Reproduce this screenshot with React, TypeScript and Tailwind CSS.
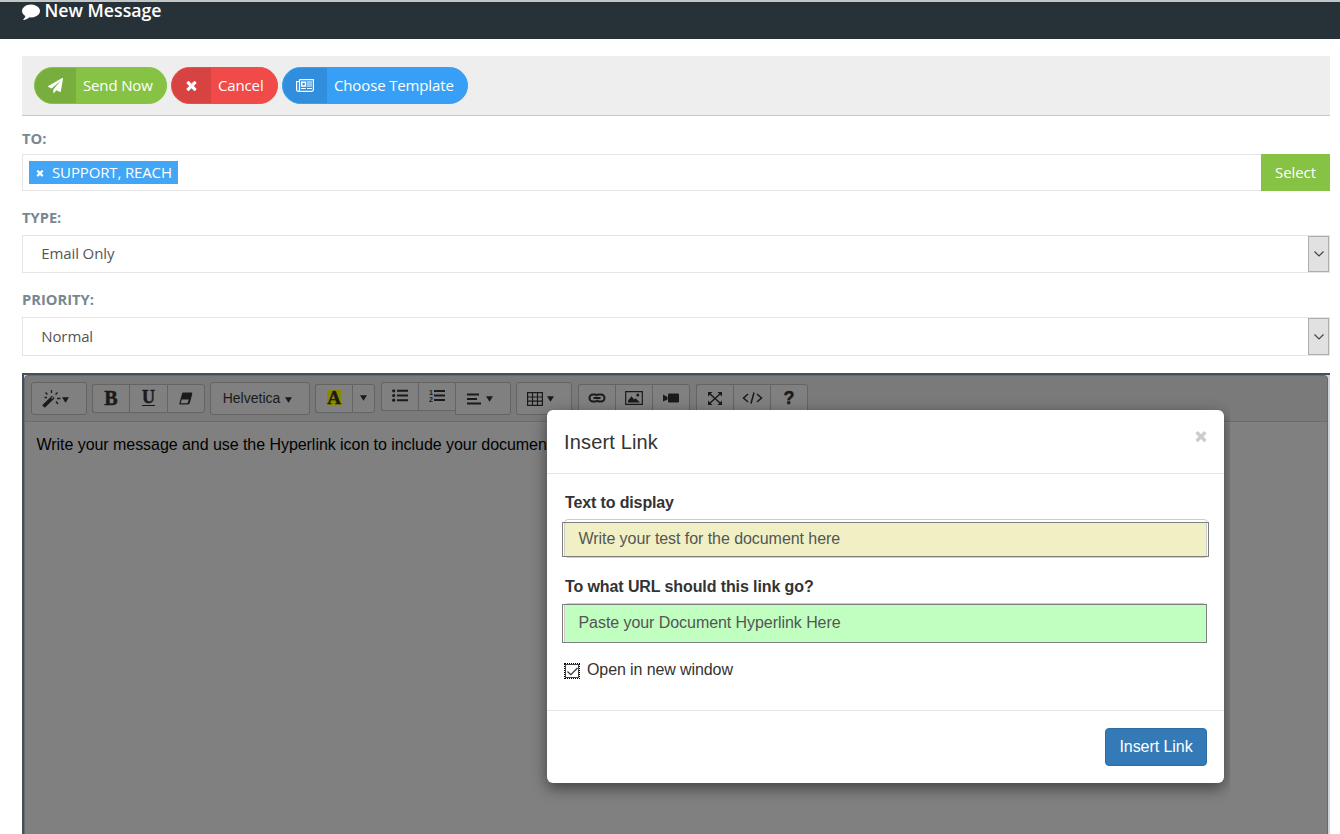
import React from "react";

type IconProps = { className?: string };

const CommentIcon = ({ className }: IconProps) => (
  <svg viewBox="0 0 1792 1792" fill="currentColor" className={className}>
    <path d="M1792 896q0 174-120 321.5t-326 233-450 85.5q-70 0-145-8-198 175-460 242-49 14-114 22-17 2-30.5-9t-17.5-29v-1q-3-4-.5-12t2-10 4.5-9.5l6-9 7-8.5 8-9q7-8 31-34.5t34.5-38 31-39.5 32.5-51 27-59 26-76q-157-89-247.5-220t-90.5-281q0-130 71-248.5t191-204.5 286-136.5 348-50.5q244 0 450 85.5t326 233 120 321.5z" />
  </svg>
);

const PlaneIcon = ({ className }: IconProps) => (
  <svg viewBox="0 0 1792 1792" fill="currentColor" className={className}>
    <path d="M1764 11q33 24 27 64l-256 1536q-5 29-32 45-14 8-31 8-11 0-24-5l-453-185-242 295q-18 23-49 23-13 0-22-4-19-7-30.5-23.5t-11.5-36.5v-349l864-1059-1069 925-395-162q-37-14-40-55-2-40 32-59l1664-960q15-9 32-9 20 0 36 11z" />
  </svg>
);

const TimesIcon = ({ className }: IconProps) => (
  <svg viewBox="0 0 1792 1792" fill="currentColor" className={className}>
    <path d="M1490 1322q0 40-28 68l-136 136q-28 28-68 28t-68-28l-294-294-294 294q-28 28-68 28t-68-28l-136-136q-28-28-28-68t28-68l294-294-294-294q-28-28-28-68t28-68l136-136q28-28 68-28t68 28l294 294 294-294q28-28 68-28t68 28l136 136q28 28 28 68t-28 68l-294 294 294 294q28 28 28 68z" />
  </svg>
);

const NewsIcon = ({ className }: IconProps) => (
  <svg viewBox="0 0 18 13" fill="none" stroke="currentColor" className={className}>
    <path d="M3.5.6h13.9v10.2q0 1.5-1.5 1.5H2.1Q.6 12.300 .6 10.800V2.500h2.900M3.500.6v10.200q0 1.500-1.500 1.500" strokeWidth="1.200" />
    <path d="M5.700 3.200h3.800v3.700h-3.800z" strokeWidth="1.500" />
    <path d="M11 3h5M11 5h5M11 7h5M5 9.500h4.800M11 9.500h5" strokeWidth="1.100" />
  </svg>
);

const MagicIcon = () => (
  <svg width="20" height="18" viewBox="0 0 20 18" fill="none" stroke="currentColor">
    <path d="M1.500 16.500L11.300 7" strokeWidth="3.800" />
    <path d="M9.500 8.700L11 7.200" stroke="#7f7f7f" strokeWidth="1.200" />
    <path d="M9.500 0v3M3.500 2.500l2 2M15.500 2.500l-2 2M2.500 7.500H5M15 8.500h3.500M14 11.500l2 2.500" strokeWidth="1.300" />
  </svg>
);

const EraserIcon = () => (
  <svg width="14" height="13" viewBox="0 0 14 13" fill="currentColor">
    <path fillRule="evenodd" d="M4.200.5H12.500q1.100 0 .8 1.200L11 10.500Q10.500 12.500 9 12.500H1.200Q0 12.500.4 11.200L3 1.700Q3.300.5 4.200.5zM2.700 7.500L1.700 11.200H8.500L9.800 7.500z" />
  </svg>
);

const Caret = ({ className = "" }: IconProps) => (
  <svg width="7" height="6" viewBox="0 0 7 6" fill="currentColor" className={className}>
    <path d="M0 .3h7L3.500 5.700z" />
  </svg>
);

const ListUlIcon = () => (
  <svg width="16" height="13" viewBox="0 0 16 13" fill="currentColor">
    <path d="M5 .8h11v2H5zM5 5.500h11v2H5zM5 10.200h11v2H5z" />
    <circle cx="1.700" cy="1.800" r="1.600" />
    <circle cx="1.700" cy="6.500" r="1.600" />
    <circle cx="1.700" cy="11.200" r="1.600" />
  </svg>
);

const ListOlIcon = () => (
  <svg width="16" height="13" viewBox="0 0 16 13" fill="currentColor">
    <path d="M5 1h11v2H5zM5 5.500h11v2H5zM5 10h11v2H5z" />
    <text x="0" y="5.600" fontSize="7" fontWeight="700" fontFamily="Liberation Sans, sans-serif">1</text>
    <text x="0" y="12.700" fontSize="7" fontWeight="700" fontFamily="Liberation Sans, sans-serif">2</text>
  </svg>
);

const AlignIcon = () => (
  <svg width="14" height="12" viewBox="0 0 14 12" fill="currentColor">
    <path d="M0 .5h12v2H0zM0 5h10v2H0zM0 9.500h14v2H0z" />
  </svg>
);

const TableIcon = () => (
  <svg width="16" height="14" viewBox="0 0 16 14" fill="none" stroke="currentColor" strokeWidth="1.200">
    <path d="M.6.6h14.800v12.800H.6zM.6 5h14.800M.6 9.200h14.800M5.500.6v12.800M10.500.6v12.800" />
  </svg>
);

const LinkIcon = () => (
  <svg width="18" height="10" viewBox="0 0 18 10" fill="none" stroke="currentColor" strokeWidth="2">
    <path d="M8 1.500H5a3.500 3.500 0 0 0 0 7h2.500q1.800 0 2.500-1.500M10 8.500h3a3.500 3.500 0 0 0 0-7h-2.500Q8.700 1.500 8 3M5.500 5h7" />
  </svg>
);

const PictureIcon = () => (
  <svg width="18" height="14" viewBox="0 0 18 14" fill="currentColor">
    <path d="M.7.7h16.600v12.600H.7z" fill="none" stroke="currentColor" strokeWidth="1.200" />
    <path d="M3 11.500V9.800l3.500-4.500L9 8.500l1.500-1.300 4.500 4.300z" />
    <circle cx="12.800" cy="4" r="1.500" />
  </svg>
);

const VideoIcon = () => (
  <svg width="16" height="10" viewBox="0 0 16 10" fill="currentColor">
    <path d="M0 1.500L4.500 4v2.500L0 8.500z" />
    <rect x="5" y="0.500" width="11" height="9" rx="1.200" />
  </svg>
);

const ExpandIcon = () => (
  <svg width="14" height="13" viewBox="0 0 14 13" fill="currentColor">
    <path d="M0 0h4.500L0 4.500zM14 0v4.500L9.500 0zM0 13V8.500L4.500 13zM14 13H9.500L14 8.500z" />
    <path d="M1.500 1.500l11 10M12.500 1.500l-11 10" stroke="currentColor" strokeWidth="1.500" />
  </svg>
);

const CodeIcon = () => (
  <svg width="21" height="12" viewBox="0 0 21 12" fill="none" stroke="currentColor" strokeWidth="1.500">
    <path d="M6 2L1.500 6 6 10M15 2l4.500 4-4.500 4M12 .5L9 11.500" />
  </svg>
);

type PillProps = { label: string; tone: string; side: string; icon: React.ReactNode };

const Pill = ({ label, tone, side, icon }: PillProps) => (
  <button className={`flex h-[37px] shrink-0 overflow-hidden rounded-full border text-[15px] tracking-[-0.140px] text-white ${tone}`}>
    <span className={`flex h-full items-center justify-center bg-black/10 ${side}`}>{icon}</span>
    <span className="flex h-full flex-1 items-center pl-[7px] whitespace-nowrap">{label}</span>
  </button>
);

type ToolProps = { className: string; children: React.ReactNode };

const Tool = ({ className, children }: ToolProps) => (
  <button className={`flex shrink-0 items-center justify-center border border-[#646464] ${className}`}>{children}</button>
);

type SelectFieldProps = { label: string; value: string; size: string; text: string };

const SelectField = ({ label, value, size, text }: SelectFieldProps) => (
  <>
    <label className="block h-5 text-[14.700px] leading-5 font-bold text-[#778794]">{label}</label>
    <div className={`flex justify-between border border-[#e5e5e5] ${size}`}>
      <span className={`flex items-center pl-[18.300px] text-[15px] tracking-[-0.120px] text-[#555] ${text}`}>{value}</span>
      <span className="flex w-[21px] items-center justify-center border border-[#adadad] bg-[#e1e1e1]">
        <svg width="10" height="6" viewBox="0 0 10 6" fill="none" stroke="#444" strokeWidth="1.200">
          <path d="M.5.5L5 5 9.500.5" />
        </svg>
      </span>
    </div>
  </>
);

const LinkDialog = () => (
  <div className="absolute top-[390px] left-[517px] h-[444px] w-[713px] overflow-hidden pt-5 pl-[30px] font-['Liberation_Sans',sans-serif]">
    <div className="flex h-[373px] w-[677px] flex-col rounded-md bg-white text-base tracking-[-0.060px] text-[#333] shadow-[0_5px_15px_rgba(0,0,0,0.5)]">
      <div className="flex h-16 shrink-0 justify-between border-b border-[#e5e5e5] pr-[15px] pl-[17px]">
        <h4 className="pt-[17px] text-[20px] leading-[30px] tracking-[0.150px]">Insert Link</h4>
        <TimesIcon className="mt-[18px] size-4 text-[#ccc]" />
      </div>
      <div className="flex h-[236px] shrink-0 flex-col pl-[15px]">
        <label className="mt-[17px] ml-[3px] h-6 leading-6 font-bold tracking-[-0.130px]">Text to display</label>
        <div className="relative mt-1 ml-0.5 h-[39px] w-[644px] rounded border border-[#ccc]">
          <div className="absolute top-[2px] -left-[3px] flex h-[35px] w-[647px] items-center border border-[#7f7f7f] bg-[linear-gradient(90deg,#fff_0_1px,#ccc_1px_2px,#f0f0c4_2px_643px,#ccc_643px_644px,#fff_644px)] pb-px pl-[15.500px] text-[#555]">
            Write your test for the document here
          </div>
        </div>
        <label className="mt-[17px] ml-[3px] h-6 leading-6 font-bold tracking-[-0.100px]">To what URL should this link go?</label>
        <div className="relative mt-1 ml-0.5 h-[39px] w-[643px] rounded border border-[#ccc]">
          <div className="absolute top-0 -left-[3px] flex h-[39px] w-[645px] items-center border border-[#7f7f7f] bg-[linear-gradient(90deg,#fff_0_1px,#ccc_1px_2px,#c0ffc0_2px)] pb-px pl-[15.500px] text-[#555]">
            Paste your Document Hyperlink Here
          </div>
        </div>
        <label className="mt-4 ml-0.5 flex h-6 items-center tracking-[-0.100px]">
          <span className="mt-[2px] mr-[7px] flex size-4 items-center justify-center border border-dotted border-black bg-white">
            <span className="flex size-[14px] items-center justify-center border border-[#444]">
              <svg width="11" height="9" viewBox="0 0 11 9" fill="none" stroke="#333" strokeWidth="1.200">
                <path d="M.5 4.500L3.800 7.700 10.500 1" />
              </svg>
            </span>
          </span>
          Open in new window
        </label>
      </div>
      <div className="flex flex-1 justify-end border-t border-[#e5e5e5] pt-[17px] pr-[17px]">
        <button className="h-[38px] w-[102px] rounded border border-[#2e6da4] bg-[#337ab7] text-white">Insert Link</button>
      </div>
    </div>
  </div>
);

export default function App() {
  return (
    <div className="relative h-[834px] w-[1340px] overflow-hidden bg-white font-['Open_Sans',sans-serif]">
      <header className="flex h-[39px] items-start border-t-2 border-[#c3c6c6] bg-[#273238] pl-[22px] text-white">
        <CommentIcon className="h-[18px] w-[18px]" />
        <h1 className="pl-[4.500px] text-[17.700px] leading-[16px] font-semibold">New Message</h1>
      </header>
      <main className="pt-[17px] pr-[10px] pl-[22px]">
        <div className="flex h-[60px] gap-1 border-b border-[#c6c6c6] bg-[#eee] pt-[11px] pl-3">
          <Pill label="Send Now" tone="w-[133px] bg-[#86c244] border-[#86c244]" side="w-[41px]" icon={<PlaneIcon className="size-[15px]" />} />
          <Pill label="Cancel" tone="w-[107px] bg-[#f04b48] border-[#f04b48]" side="w-[39px]" icon={<TimesIcon className="size-[15px]" />} />
          <Pill label="Choose Template" tone="w-[186px] bg-[#379ff5] border-[#379ff5]" side="w-[44px]" icon={<NewsIcon className="h-[13px] w-[18px]" />} />
        </div>
        <label className="mt-[12px] block h-5 text-[14.700px] leading-5 font-bold text-[#778794]">TO:</label>
        <div className="mt-[6px] flex h-[37px]">
          <div className="flex flex-1 items-center border border-r-0 border-[#e5e5e5] pl-[6px]">
            <span className="flex h-[23px] w-[149px] items-center bg-[#42a5f5] pl-[6px] text-[15px] tracking-[-0.140px] whitespace-nowrap text-white">
              <TimesIcon className="mr-[7px] size-[10px]" />
              SUPPORT, REACH
            </span>
          </div>
          <button className="w-[69px] bg-[#86c244] text-[15px] tracking-[-0.100px] text-white">Select</button>
        </div>
        <div className="mt-[16px]">
          <SelectField label="TYPE:" value="Email Only" size="mt-[8px] h-[38px]" text="pb-[2px]" />
        </div>
        <div className="mt-[16px]">
          <SelectField label="PRIORITY:" value="Normal" size="mt-[8px] h-[39px]" text="pb-0" />
        </div>
        <section className="mt-[17px] flex h-[480px] border-t-2 border-l-2 border-[#464e5b] bg-[#d0d5da] pr-[2px]">
          <div className="flex-1 overflow-hidden rounded-t border border-[#636a72] bg-gray-500">
            <div className="flex h-[46px] items-start border-b border-[#6c6c6c] bg-[#7a7a7a] pt-[6px] pl-[6px] text-[#1a1a1a]">
              <Tool className="h-[33px] w-[56px] rounded-[3px] bg-[#808080] pr-[8px]">
                <MagicIcon /><Caret className="mt-[2px]" />
              </Tool>
              <div className="mt-[2px] ml-[5px] flex h-[29px] font-['Liberation_Serif',serif] text-[20px] font-bold">
                <Tool className="w-[37px] rounded-l-[3px] border-r-0 bg-[#808080] pb-[2px] [-webkit-text-stroke:0.5px_#1a1a1a]">B</Tool>
                <Tool className="w-[38px] border-r-0 bg-[#808080] pb-[2px]">
                  <span className="text-[18px] underline decoration-1 underline-offset-2 [-webkit-text-stroke:0.5px_#1a1a1a]">U</span>
                </Tool>
                <Tool className="w-[38px] rounded-r-[3px] bg-[#808080] pr-px"><EraserIcon /></Tool>
              </div>
              <Tool className="ml-[5px] h-[33px] w-[100px] rounded-[3px] bg-[#808080] pr-[5px] pb-px font-['Liberation_Sans',sans-serif] text-sm">
                Helvetica<Caret className="mt-[3px] ml-[5px]" />
              </Tool>
              <div className="mt-[2px] ml-[5px] flex h-[29px]">
                <Tool className="w-[37px] rounded-l-[3px] border-r-0 bg-[#808080] pb-[2px]">
                  <span className="h-[15px] w-[14px] bg-[#8a8a00] text-center font-['Liberation_Serif',serif] text-[19px] leading-[15px] font-bold [-webkit-text-stroke:0.4px_#1a1a1a]">A</span>
                </Tool>
                <Tool className="w-[23px] rounded-r-[3px] bg-[#808080] pr-px pb-[2px]"><Caret /></Tool>
              </div>
              <div className="ml-[6px] flex items-start">
                <Tool className="h-[29px] w-[37px] rounded-l-[3px] border-r-0 bg-[#808080] pb-[2px]"><ListUlIcon /></Tool>
                <Tool className="h-[29px] w-[37px] border-r-0 bg-[#808080] pb-[2px]"><ListOlIcon /></Tool>
                <Tool className="h-[33px] w-[56px] rounded-r-[3px] bg-[#808080] pr-[6px]">
                  <AlignIcon /><Caret className="ml-[5px]" />
                </Tool>
              </div>
              <Tool className="ml-[5px] h-[33px] w-[56px] rounded-[3px] bg-[#808080] pr-[7px]">
                <TableIcon /><Caret className="ml-[4px]" />
              </Tool>
              <div className="mt-[2px] ml-[6px] flex h-[29px]">
                <Tool className="w-[37px] rounded-l-[3px] border-r-0 bg-[#808080] pb-[2px]"><LinkIcon /></Tool>
                <Tool className="w-[37px] border-r-0 bg-[#808080] pb-[2px]"><PictureIcon /></Tool>
                <Tool className="w-[38px] rounded-r-[3px] bg-[#808080] pb-[2px]"><VideoIcon /></Tool>
              </div>
              <div className="mt-[2px] ml-[6px] flex h-[29px]">
                <Tool className="w-[37px] rounded-l-[3px] border-r-0 bg-[#808080] pb-px"><ExpandIcon /></Tool>
                <Tool className="w-[37px] border-r-0 bg-[#808080] pb-[2px]"><CodeIcon /></Tool>
                <Tool className="w-[38px] rounded-r-[3px] bg-[#808080] font-['Liberation_Sans',sans-serif] text-[18px] font-bold [-webkit-text-stroke:0.4px_#1a1a1a]">?</Tool>
              </div>
            </div>
            <div className="h-[440px] bg-[#808080] pt-[11px] pl-[11.500px] font-['Liberation_Sans',sans-serif] text-base leading-6 tracking-[-0.050px] text-black">
              Write your message and use the Hyperlink icon to include your document
            </div>
          </div>
        </section>
      </main>
      <LinkDialog />
    </div>
  );
}
